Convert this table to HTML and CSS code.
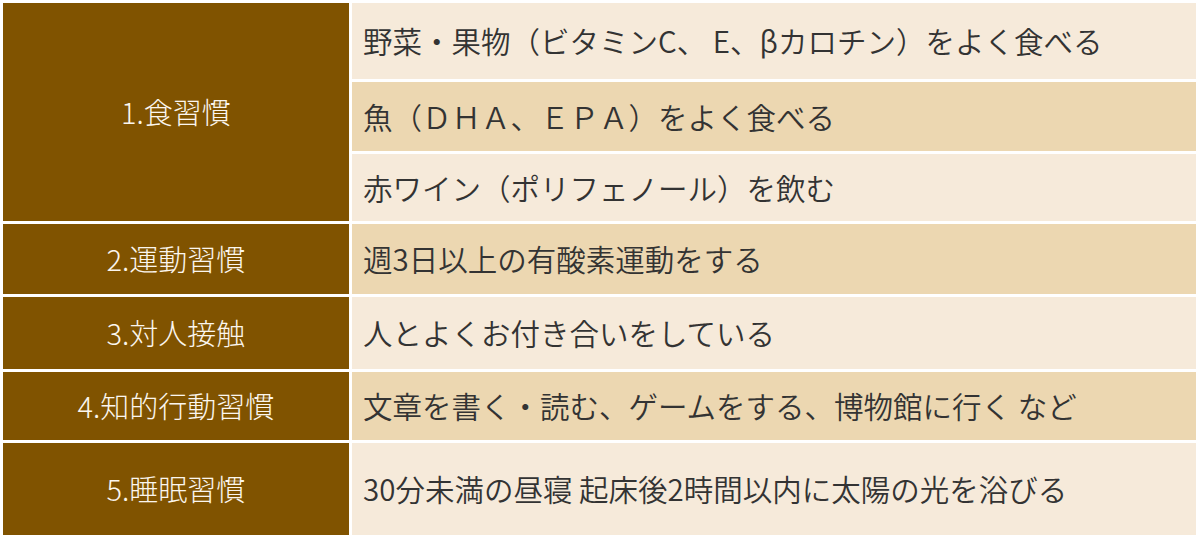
FILE: index.html
```html
<!DOCTYPE html>
<html lang="ja">
<head>
<meta charset="utf-8">
<link rel="stylesheet" href="styles.css">
<title>習慣</title>
</head>
<body>
<div class="grid">
  <div class="head span3">1.食習慣</div>
  <div class="cell light">野菜・果物（ビタミンC、 E、βカロチン）をよく食べる</div>
  <div class="cell dark">魚（ＤＨＡ、ＥＰＡ）をよく食べる</div>
  <div class="cell light">赤ワイン（ポリフェノール）を飲む</div>
  <div class="head">2.運動習慣</div>
  <div class="cell dark">週3日以上の有酸素運動をする</div>
  <div class="head">3.対人接触</div>
  <div class="cell light">人とよくお付き合いをしている</div>
  <div class="head">4.知的行動習慣</div>
  <div class="cell dark">文章を書く・読む、ゲームをする、博物館に行く など</div>
  <div class="head">5.睡眠習慣</div>
  <div class="cell light">30分未満の昼寝 起床後2時間以内に太陽の光を浴びる</div>
</div>
</body>
</html>
```
FILE: styles.css
```css
html, body {
  margin: 0;
  padding: 0;
  background: #ffffff;
}
body {
  font-family: "Noto Sans CJK JP", "Noto Sans", sans-serif;
  font-size: 29px;
}
.grid {
  display: grid;
  grid-template-columns: 346px 844px;
  grid-template-rows: 76px 69px 67px 70px 72px 68px 92px;
  gap: 3px;
  padding: 3px;
  width: 1193px;
}
.head {
  background: #805300;
  color: #fbf6ee;
  display: flex;
  align-items: center;
  justify-content: center;
  font-weight: 300;
  padding-bottom: 2px;
}
.span3 {
  grid-row: span 3;
}
.cell {
  display: flex;
  align-items: center;
  padding-left: 11px;
  color: #333333;
  font-size: 29.5px;
  font-weight: 350;
  padding-bottom: 2px;
  white-space: nowrap;
}
.light {
  background: #f6eada;
}
.dark {
  background: #ecd7b1;
}
```
